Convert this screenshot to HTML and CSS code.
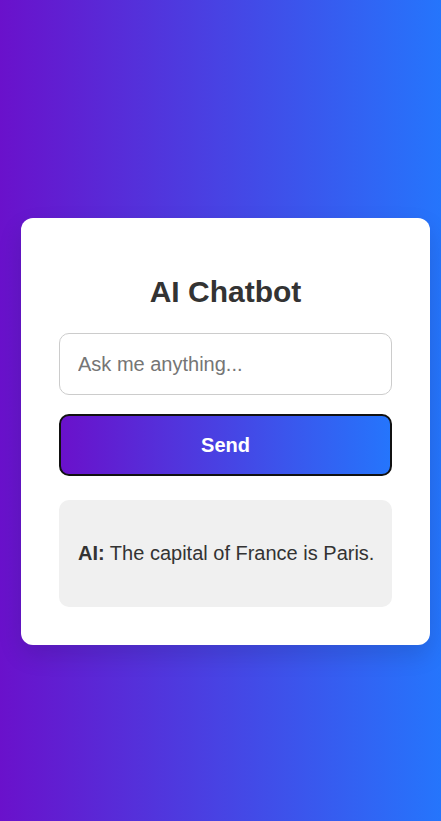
FILE: index.html
```html
<!DOCTYPE html>
<html lang="en">
<head>
<meta charset="utf-8">
<title>AI Chatbot</title>
<link rel="stylesheet" href="styles.css">
</head>
<body>
<main class="page">
  <section class="card">
    <h1 class="title">AI Chatbot</h1>
    <input class="ask" type="text" placeholder="Ask me anything...">
    <button class="send" type="button">Send</button>
    <div class="response">
      <p class="response-text"><strong>AI:</strong> The capital of France is Paris.</p>
    </div>
  </section>
</main>
</body>
</html>
```

FILE: styles.css
```css
html, body {
  margin: 0;
  height: 100%;
}
body {
  background: linear-gradient(to right, #6a11cb, #2575fc);
  font-family: "Liberation Sans", Arial, sans-serif;
  color: #333;
}
.page {
  display: flex;
  align-items: flex-start;
  padding: 218px 0 0 21px;
}
.card {
  width: 409px;
  box-sizing: border-box;
  background: #fff;
  border-radius: 12px;
  padding: 38px 38px 38px 38px;
  display: flex;
  flex-direction: column;
  box-shadow: 0 10px 25px rgba(0, 0, 0, 0.12);
}
.title {
  margin: 18px 0 23px;
  font-size: 30px;
  line-height: 36px;
  font-weight: 700;
  text-align: center;
  color: #333;
}
.ask {
  box-sizing: border-box;
  height: 62px;
  width: 100%;
  margin: 0;
  padding: 0 18px;
  border: 1px solid #ccc;
  border-radius: 10px;
  font-family: inherit;
  font-size: 20px;
  color: #333;
  outline: none;
}
.ask::placeholder {
  color: #757575;
}
.send {
  box-sizing: border-box;
  height: 62px;
  width: 100%;
  margin: 19px 0 0;
  border: 2px solid #111;
  border-radius: 10px;
  background: linear-gradient(to right, #6a11cb, #2575fc);
  color: #fff;
  font-family: inherit;
  font-size: 20px;
  font-weight: 700;
}
.response {
  margin-top: 24px;
  background: #f0f0f0;
  border-radius: 10px;
  padding: 20px 10px 20px 19px;
}
.response-text {
  margin: 20px 0;
  font-size: 20px;
  line-height: 27px;
  white-space: nowrap;
}
```
